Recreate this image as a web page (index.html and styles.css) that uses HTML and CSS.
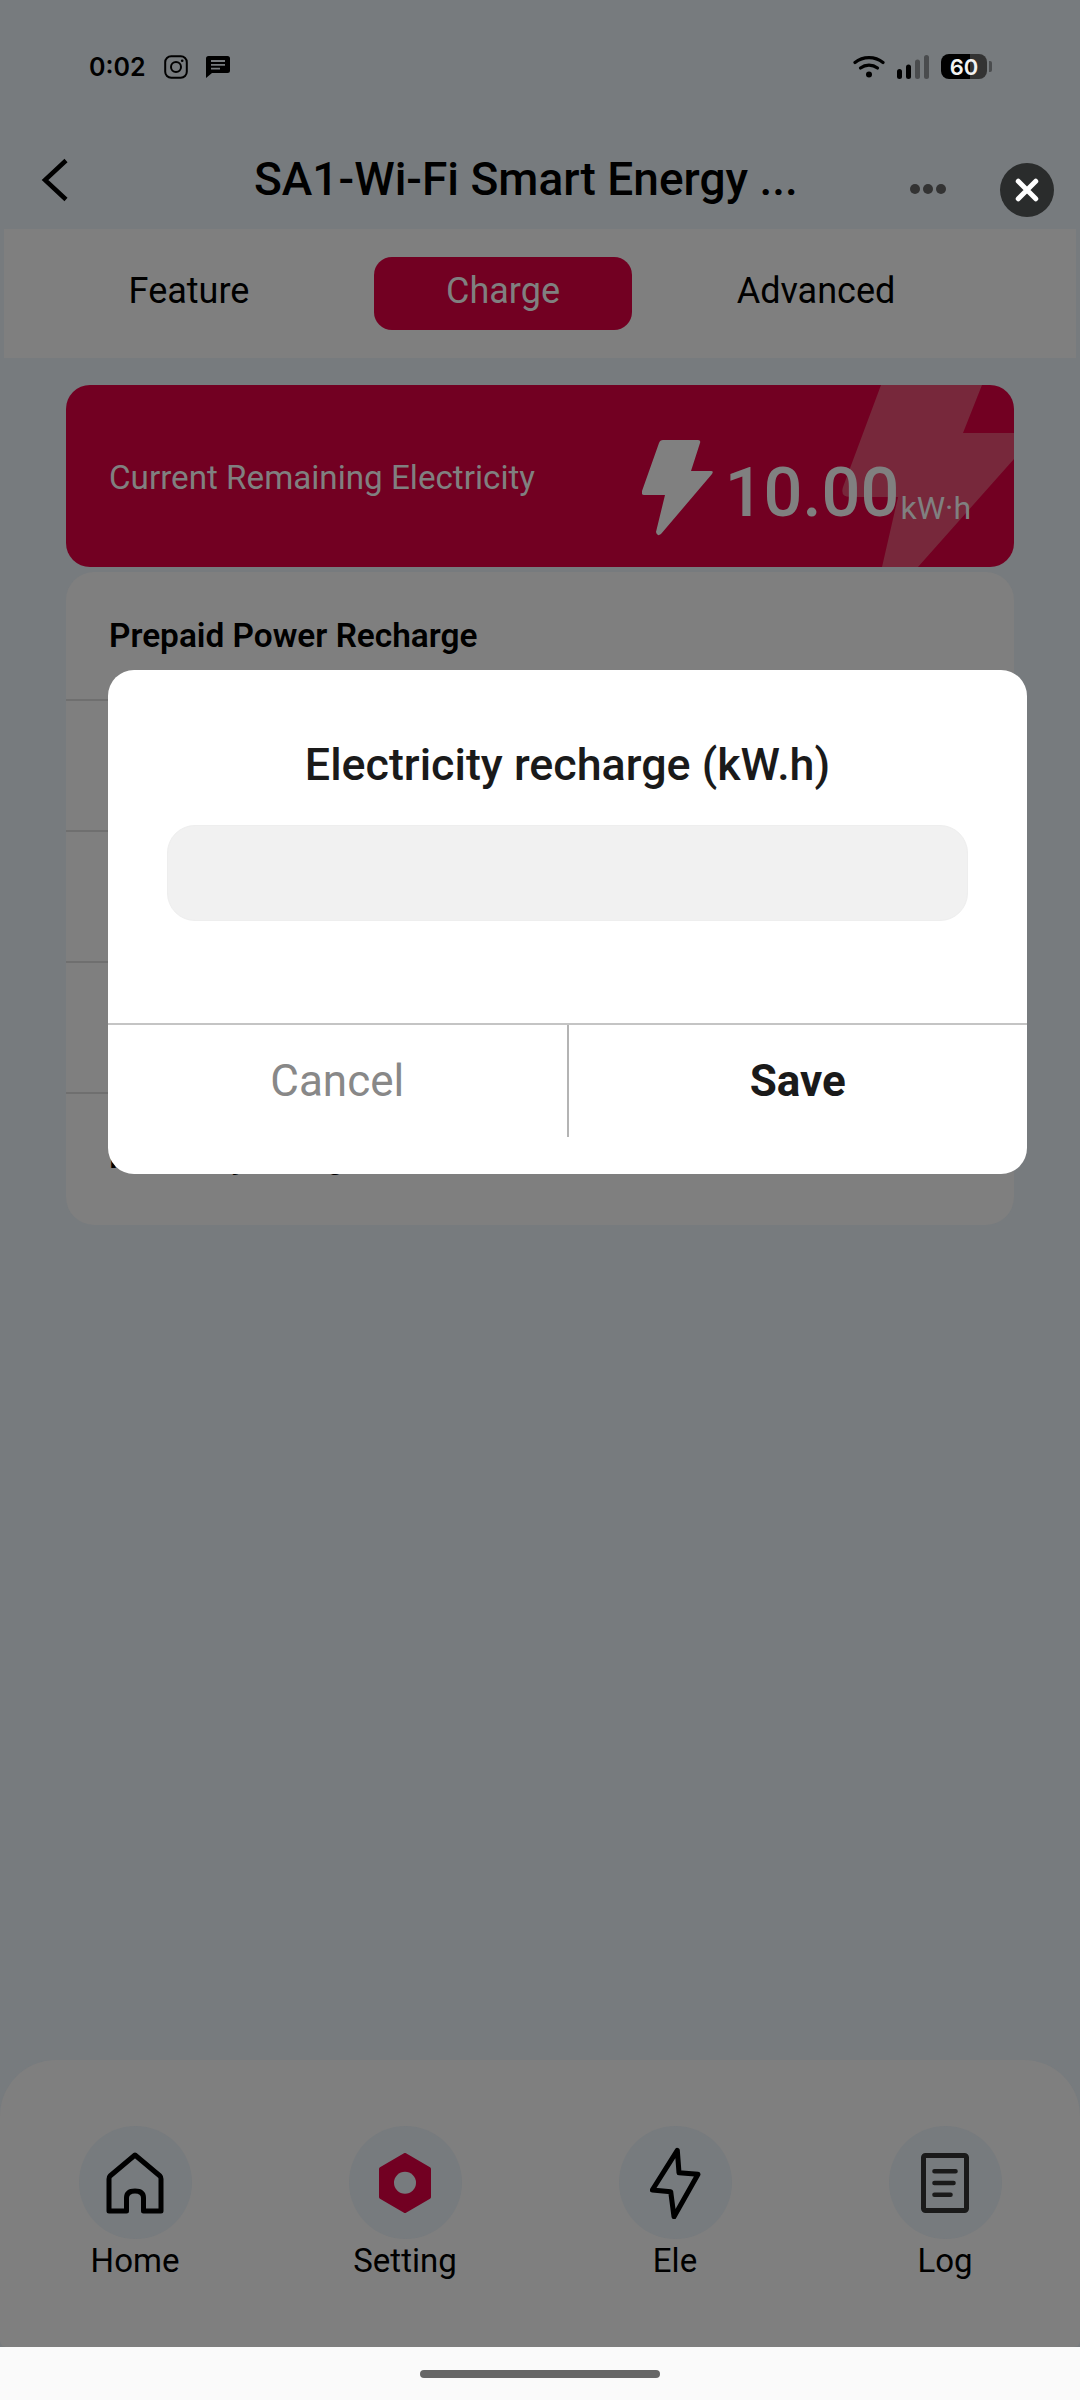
FILE: index.html
```html
<!DOCTYPE html>
<html>
<head>
  <title>Charge</title>
  <link rel="stylesheet" href="styles.css">
</head>
<body>
  <div class="screen">
    <div class="status">
      <div class="status-left">
        <span class="time">0:02</span>
        <svg class="ic-insta" viewBox="0 0 24 24"><rect x="1.2" y="1.2" width="21.6" height="21.6" rx="6" fill="none" stroke="#000" stroke-width="2"/><circle cx="12" cy="12" r="5" fill="none" stroke="#000" stroke-width="2"/><circle cx="18.2" cy="5.8" r="1.3" fill="#000"/></svg>
        <svg class="ic-msg" viewBox="0 0 24 22"><path d="M2.5 0h19A2.5 2.5 0 0 1 24 2.500v12a2.500 2.500 0 0 1-2.500 2.500H6l-6 5V2.500A2.500 2.500 0 0 1 2.500 0z" fill="#000"/><path d="M5 5h14M5 8.800h14M5 12.600h9" stroke="#777b7e" stroke-width="1.800"/></svg>
      </div>
      <div class="status-right">
        <svg class="ic-wifi" viewBox="0 0 32 23"><path d="M2 7.500C10 1 22 1 30 7.500" fill="none" stroke="#000" stroke-width="3.200" stroke-linecap="round"/><path d="M7.500 13c5-3.800 12-3.800 17 0" fill="none" stroke="#000" stroke-width="3.200" stroke-linecap="round"/><circle cx="16" cy="19.500" r="3" fill="#000"/></svg>
        <svg class="ic-signal" viewBox="0 0 32 24"><rect x="0" y="14" width="5" height="10" rx="2.500" fill="#000"/><rect x="9" y="9.500" width="5" height="14.500" rx="2.500" fill="#000"/><rect x="18" y="4.500" width="5" height="19.500" rx="2.500" fill="#4a4c4e"/><rect x="27" y="0" width="5" height="24" rx="2.500" fill="#4a4c4e"/></svg>
        <div class="battery"><span class="battery-num">60</span></div>
        <div class="battery-nub"></div>
      </div>
    </div>

    <div class="header">
      <svg class="ic-back" viewBox="0 0 28 44"><path d="M25 2.500 4 22l21 19.500" fill="none" stroke="#000" stroke-width="4.500"/></svg>
      <div class="title">SA1-Wi-Fi Smart Energy ...</div>
      <div class="dots"><i></i><i></i><i></i></div>
      <div class="close">
        <svg viewBox="0 0 24 24"><path d="M5 5l14 14M19 5 5 19" stroke="#fff" stroke-width="4" stroke-linecap="round"/></svg>
      </div>
    </div>

    <div class="tabs">
      <div class="tab tab-feature">Feature</div>
      <div class="tab tab-active">Charge</div>
      <div class="tab tab-advanced">Advanced</div>
    </div>

    <div class="balance">
      <svg class="balance-bg" viewBox="0 0 948 182"><path d="M815 0H916L897 48H948V74L852 182H816L832 112H784Q774 112 777 102Z" fill="#77283b"/></svg>
      <span class="balance-label">Current Remaining Electricity</span>
      <div class="balance-value">
        <svg class="ic-bolt" viewBox="0 0 71 96"><path d="M21 0H56Q59 0 58 3L49 31H69Q72 31 70 34L19 94Q15 97 14 92L23 55H2Q-1 55 0 51L17 3Q18 0 21 0Z" fill="#808080"/></svg>
        <span class="balance-num">10.00</span>
        <span class="balance-unit">kW·h</span>
      </div>
    </div>

    <div class="list">
      <div class="row"><b>Prepaid Power Recharge</b></div>
      <div class="row"></div>
      <div class="row"></div>
      <div class="row"></div>
      <div class="row last"><b>Recovery Charge</b></div>
    </div>

    <div class="nav">
      <div class="nav-item">
        <div class="nav-circle">
          <svg class="ic-home" viewBox="0 0 58 62"><path d="M29 3 4 24Q3 25 3 27V59H20.500V46Q20.500 39 29 39 37.500 39 37.500 46V59H55V27Q55 25 54 24Z" fill="none" stroke="#000" stroke-width="5" stroke-linejoin="round"/></svg>
        </div>
        <span>Home</span>
      </div>
      <div class="nav-item">
        <div class="nav-circle">
          <svg class="ic-hex" viewBox="0 0 52 60"><path d="M26 2 50 16V44L26 58 2 44V16Z" fill="#720022" stroke="#720022" stroke-width="4" stroke-linejoin="round"/><circle cx="26" cy="29.700" r="11" fill="#777b7e"/></svg>
        </div>
        <span>Setting</span>
      </div>
      <div class="nav-item">
        <div class="nav-circle">
          <svg class="ic-ele" viewBox="0 0 51 72"><path d="M27.300 3.300 29 25.700 48 27.300 24 69.700 20.700 44.700 2.300 43Z" fill="none" stroke="#000" stroke-width="5" stroke-linejoin="round"/></svg>
        </div>
        <span>Ele</span>
      </div>
      <div class="nav-item">
        <div class="nav-circle">
          <svg class="ic-log" viewBox="0 0 48 60"><rect x="2.500" y="2.500" width="43" height="55" rx="2" fill="none" stroke="#1a1a1a" stroke-width="5"/><path d="M13.500 18.300h21M13.500 30h19M13.500 41.700h16" stroke="#1a1a1a" stroke-width="4.600" stroke-linecap="round"/></svg>
        </div>
        <span>Log</span>
      </div>
    </div>

    <div class="sysbar"><div class="home-pill"></div></div>

    <div class="dialog">
      <h3 class="dialog-title">Electricity recharge (kW.h)</h3>
      <div class="dialog-input"></div>
      <div class="dialog-btns">
        <div class="btn btn-cancel">Cancel</div>
        <div class="btn btn-save">Save</div>
      </div>
    </div>
  </div>
</body>
</html>
```
FILE: styles.css
```css
html, body {
  margin: 0;
  height: 100%;
}
body {
  background: #777b7e;
  font-family: Roboto, sans-serif;
  color: #000;
}
.screen {
  position: relative;
  width: 1080px;
  height: 2400px;
  display: flex;
  flex-direction: column;
  overflow: hidden;
}

/* status bar */
.status {
  height: 132px;
  flex: none;
  box-sizing: border-box;
  padding: 54px 88px 0 89px;
  display: flex;
  justify-content: space-between;
  align-items: flex-start;
}
.status-left {
  display: flex;
  align-items: center;
  height: 25px;
}
.time {
  font-family: Inter, sans-serif;
  font-weight: 600;
  font-size: 25px;
  width: 75px;
}
.ic-insta { width: 24px; height: 24px; margin-right: 18px; }
.ic-msg { width: 24px; height: 22px; }
.status-right {
  display: flex;
  align-items: center;
  height: 25px;
}
.ic-wifi { width: 32px; height: 23px; margin-right: 12px; }
.ic-signal { width: 32px; height: 24px; margin-right: 12px; }
.battery {
  width: 46px;
  height: 25px;
  border-radius: 8px;
  background: linear-gradient(to right, #000 63%, #333 63%);
  display: flex;
  align-items: center;
  justify-content: center;
}
.battery-num {
  font-family: Inter, sans-serif;
  font-weight: 600;
  font-size: 22px;
  color: #f2f2f2;
}
.battery-nub {
  width: 3px;
  height: 11px;
  margin-left: 2px;
  background: #4a4c4e;
  border-radius: 0 2px 2px 0;
}

/* header */
.header {
  height: 97px;
  flex: none;
  position: relative;
  display: flex;
  align-items: flex-start;
}
.ic-back { width: 28px; height: 44px; margin: 26px 0 0 41px; }
.title {
  font-size: 46px;
  font-weight: 500;
  line-height: 52px;
  margin: 21px 0 0 185px;
  white-space: nowrap;
}
.dots {
  position: absolute;
  left: 910px;
  top: 52px;
  display: flex;
  gap: 3px;
}
.dots i {
  display: block;
  width: 10px;
  height: 10px;
  border-radius: 50%;
  background: #333;
}
.close {
  position: absolute;
  left: 1000px;
  top: 31px;
  width: 54px;
  height: 54px;
  border-radius: 50%;
  background: #2a2c2c;
  display: flex;
  align-items: center;
  justify-content: center;
}
.close svg { width: 30px; height: 30px; }

/* tabs */
.tabs {
  height: 129px;
  flex: none;
  margin: 0 4px;
  background: #7f7f7f;
  display: flex;
  align-items: center;
  font-size: 36px;
}
.tab {
  display: flex;
  align-items: center;
  justify-content: center;
  height: 73px;
  box-sizing: border-box;
  padding-bottom: 6px;
}
.tab-feature { width: 370px; }
.tab-active {
  width: 258px;
  background: #720022;
  color: #808080;
  border-radius: 18px;
}
.tab-advanced { width: 368px; }

/* remaining electricity */
.balance {
  position: relative;
  height: 182px;
  flex: none;
  margin: 27px 66px 0;
  background: #720022;
  border-radius: 24px;
  overflow: hidden;
  display: flex;
  align-items: center;
  justify-content: space-between;
  box-sizing: border-box;
  padding: 0 43px;
  color: #808080;
}
.balance-bg {
  position: absolute;
  left: 0;
  top: 0;
  width: 948px;
  height: 182px;
}
.balance-label {
  position: relative;
  font-size: 33.200px;
  margin-top: 3px;
}
.balance-value {
  position: relative;
  display: flex;
  align-items: flex-end;
  margin-top: 26px;
}
.ic-bolt { width: 71px; height: 96px; margin: 0 12px 3px 0; }
.balance-num {
  font-size: 68.500px;
  font-weight: 500;
  line-height: 68px;
  margin-bottom: 12px;
}
.balance-unit {
  font-size: 32px;
  line-height: 30px;
  margin: 0 0 16px 1px;
}

/* list behind the dialog */
.list {
  height: 653px;
  flex: none;
  margin: 5px 66px 0;
  background: #7f7f7f;
  border-radius: 28px;
  box-sizing: border-box;
}
.row {
  height: 131px;
  box-sizing: border-box;
  border-bottom: 2px solid #6f6f6f;
  display: flex;
  align-items: center;
  padding-left: 43px;
  font-size: 33.400px;
}
.row:first-child { height: 129px; }
.row b { font-weight: 600; }
.row.last { border-bottom: none; padding-bottom: 6px; }

/* bottom nav */
.nav {
  margin-top: auto;
  height: 287px;
  flex: none;
  background: #7f7f7f;
  border-radius: 56px 56px 6px 6px;
  display: flex;
  justify-content: space-between;
  box-sizing: border-box;
  padding: 66px 0 0;
}
.nav-item {
  width: 270px;
  display: flex;
  flex-direction: column;
  align-items: center;
  font-size: 33px;
}
.nav-circle {
  width: 113px;
  height: 113px;
  border-radius: 50%;
  background: #777b7e;
  display: flex;
  align-items: center;
  justify-content: center;
  margin-bottom: 2px;
}
.ic-home { width: 58px; height: 62px; }
.ic-hex { width: 52px; height: 60px; }
.ic-ele { width: 51px; height: 72px; }
.ic-log { width: 48px; height: 60px; }

.sysbar {
  height: 53px;
  flex: none;
  background: #fafafa;
  display: flex;
  justify-content: center;
  padding-top: 23px;
  box-sizing: border-box;
}
.home-pill {
  width: 240px;
  height: 8px;
  border-radius: 4px;
  background: #666;
}

/* dialog */
.dialog {
  position: absolute;
  left: 108px;
  top: 670px;
  width: 919px;
  height: 504px;
  background: #fff;
  border-radius: 26px;
  display: flex;
  flex-direction: column;
  overflow: hidden;
}
.dialog-title {
  margin: 66px 0 0;
  font-size: 44.800px;
  font-weight: 500;
  line-height: 58px;
  text-align: center;
  color: #1a1a1a;
}
.dialog-input {
  margin: 31px 59px 0;
  height: 96px;
  flex: none;
  background: #f1f1f1;
  border: 1px solid #eee;
  border-radius: 28px;
  box-sizing: border-box;
}
.dialog-btns {
  margin-top: 102px;
  border-top: 2px solid #c4c4c4;
  height: 112px;
  flex: none;
  display: flex;
  font-size: 44px;
}
.btn {
  flex: 1;
  display: flex;
  align-items: center;
  justify-content: center;
}
.btn-cancel {
  color: #888;
  border-right: 2px solid #b4b4b4;
}
.btn-save {
  color: #1a1a1a;
  font-weight: 700;
}
```
